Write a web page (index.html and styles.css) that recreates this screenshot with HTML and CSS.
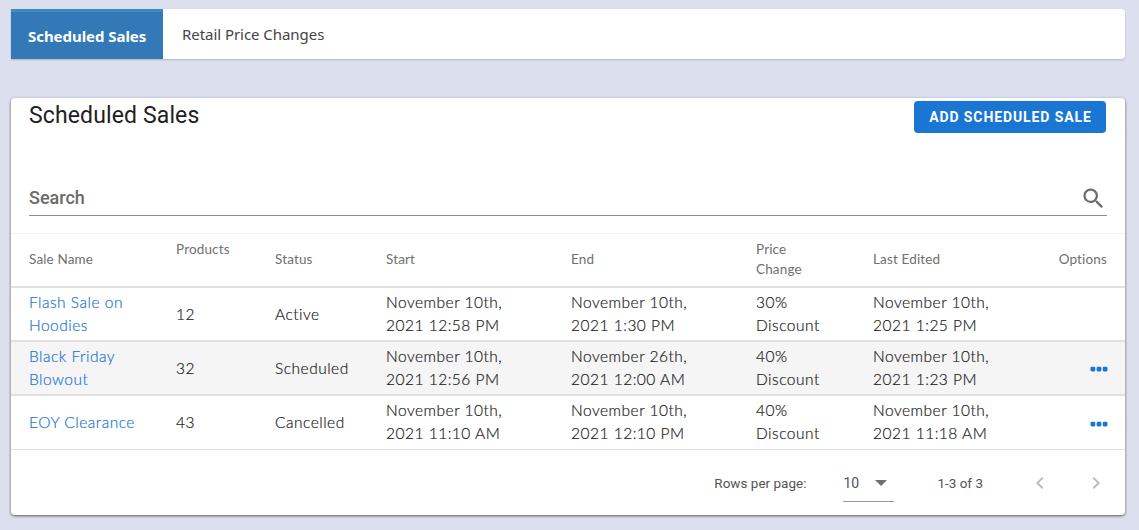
FILE: index.html
```html
<!DOCTYPE html>
<html lang="en">
<head>
<meta charset="utf-8">
<title>Scheduled Sales</title>
<link rel="stylesheet" href="styles.css">
</head>
<body>
<nav class="tabs">
  <a class="tab tab-active">Scheduled Sales</a>
  <a class="tab">Retail Price Changes</a>
</nav>
<main class="card">
  <header class="card-head">
    <h1 class="title">Scheduled Sales</h1>
    <button class="add-btn">ADD SCHEDULED SALE</button>
  </header>
  <div class="search">
    <span class="search-label">Search</span>
    <svg class="search-icon" width="27" height="27" viewBox="0 0 24 24"><path fill="#6b6b6b" d="M15.5 14h-.79l-.28-.27A6.47 6.47 0 0 0 16 9.5 6.5 6.5 0 1 0 9.5 16c1.61 0 3.09-.59 4.23-1.57l.27.28v.79l5 4.99L20.49 19l-4.99-5zm-6 0C7.01 14 5 11.99 5 9.5S7.01 5 9.5 5 14 7.01 14 9.5 11.99 14 9.5 14z"/></svg>
  </div>
  <table class="sales">
    <colgroup>
      <col class="c-name"><col class="c-prod"><col class="c-status"><col class="c-start"><col class="c-end"><col class="c-price"><col class="c-edit"><col class="c-opt">
    </colgroup>
    <thead>
      <tr>
        <th>Sale Name</th>
        <th class="th-top">Products</th>
        <th>Status</th>
        <th>Start</th>
        <th>End</th>
        <th>Price<br>Change</th>
        <th>Last Edited</th>
        <th class="th-opt">Options</th>
      </tr>
    </thead>
    <tbody>
      <tr>
        <td><a class="link">Flash Sale on<br>Hoodies</a></td>
        <td class="solo">12</td><td class="solo">Active</td>
        <td>November 10th,<br>2021 12:58 PM</td>
        <td>November 10th,<br>2021 1:30 PM</td>
        <td>30%<br>Discount</td>
        <td>November 10th,<br>2021 1:25 PM</td>
        <td></td>
      </tr>
      <tr class="alt">
        <td><a class="link">Black Friday<br>Blowout</a></td>
        <td class="solo">32</td><td class="solo">Scheduled</td>
        <td>November 10th,<br>2021 12:56 PM</td>
        <td>November 26th,<br>2021 12:00 AM</td>
        <td>40%<br>Discount</td>
        <td>November 10th,<br>2021 1:23 PM</td>
        <td class="td-opt"><svg width="18" height="6" viewBox="0 0 18 6"><rect class="dot" x="0.5" y="0.8" width="4.8" height="4.6" rx="1.3"/><rect class="dot" x="6.6" y="0.8" width="4.8" height="4.6" rx="1.3"/><rect class="dot" x="12.7" y="0.8" width="4.8" height="4.6" rx="1.3"/></svg></td>
      </tr>
      <tr class="last">
        <td><a class="link">EOY Clearance</a></td>
        <td>43</td><td>Cancelled</td>
        <td>November 10th,<br>2021 11:10 AM</td>
        <td>November 10th,<br>2021 12:10 PM</td>
        <td>40%<br>Discount</td>
        <td>November 10th,<br>2021 11:18 AM</td>
        <td class="td-opt"><svg width="18" height="6" viewBox="0 0 18 6"><rect class="dot" x="0.5" y="0.8" width="4.8" height="4.6" rx="1.3"/><rect class="dot" x="6.6" y="0.8" width="4.8" height="4.6" rx="1.3"/><rect class="dot" x="12.7" y="0.8" width="4.8" height="4.6" rx="1.3"/></svg></td>
      </tr>
    </tbody>
  </table>
  <footer class="pager">
    <span class="rows-label">Rows per page:</span>
    <span class="rows-select"><span>10</span><svg width="12" height="6" viewBox="0 0 12 6"><path fill="#6f6f6f" d="M0 0h12L6 6z"/></svg></span>
    <span class="range">1-3 of 3</span>
    <svg class="chev" width="24" height="24" viewBox="0 0 24 24"><path d="M15.41 7.41 14 6l-6 6 6 6 1.41-1.41L10.83 12z"/></svg>
    <svg class="chev chev-next" width="24" height="24" viewBox="0 0 24 24"><path d="M10 6 8.59 7.41 13.17 12l-4.58 4.59L10 18l6-6z"/></svg>
  </footer>
</main>
</body>
</html>
```
FILE: styles.css
```css
* { box-sizing: border-box; }
html, body { height: 100%; }
body {
  margin: 0;
  padding: 9px 14px 0 11px;
  background: #dcdfee;
  font-family: "Lato", "Liberation Sans", sans-serif;
  overflow: hidden;
}
.tabs {
  display: flex;
  height: 50px;
  background: #fff;
  border-radius: 0 4px 4px 0;
  box-shadow: 0 1px 2px rgba(0,0,0,.2);
}
.tab {
  display: flex;
  align-items: center;
  padding: 0 19px;
  font-family: "Noto Sans", sans-serif;
  font-size: 15px;
  letter-spacing: -.05px;
  color: #444;
}
.tab-active {
  width: 152px;
  padding: 0 0 0 17px;
  background: #3379b7;
  border-top: 3px solid #3c8dbc;
  color: #fff;
  font-weight: 700;
}
.card {
  margin-top: 39px;
  height: 417px;
  background: #fff;
  border-radius: 4px;
  box-shadow: 0 1px 3px rgba(0,0,0,.6);
}
.card-head {
  display: flex;
  justify-content: space-between;
  align-items: flex-start;
  padding: 4px 19px 0 18px;
  height: 35px;
}
.title {
  margin: 0;
  font-family: Roboto, sans-serif;
  font-size: 23px;
  font-weight: 400;
  line-height: 28px;
  letter-spacing: .13px;
  color: #212121;
}
.add-btn {
  width: 192px;
  height: 32px;
  margin-top: -1px;
  border: 0;
  padding: 0 0 0 1px;
  border-radius: 4px;
  background: #1976d2;
  color: #fff;
  font-family: Roboto, sans-serif;
  font-size: 14px;
  font-weight: 700;
  letter-spacing: .9px;
}
.search {
  display: flex;
  justify-content: space-between;
  align-items: center;
  margin: 48px 18px 0;
  height: 35px;
  border-bottom: 1px solid #8c8c8c;
}
.search-label {
  padding-bottom: 2px;
  font-family: Roboto, sans-serif;
  font-size: 18px;
  font-weight: 500;
  color: #6b6b6b;
}
.sales {
  width: 100%;
  margin-top: 17px;
  border-collapse: collapse;
  table-layout: fixed;
  border-top: 1px solid #f3f3f3;
}
.c-name { width: 165px; }
.c-prod { width: 99px; }
.c-status { width: 111px; }
.c-start { width: 185px; }
.c-end { width: 185px; }
.c-price { width: 117px; }
.c-edit { width: 170px; }
th {
  height: 53px;
  padding: 0 0 2px 18px;
  border-bottom: 2px solid #e0e0e0;
  font-size: 13.5px;
  font-weight: 400;
  line-height: 20px;
  color: #707070;
  text-align: left;
  letter-spacing: .15px;
}
th:not(:first-child), td:not(:first-child) { padding-left: 0; }
th.th-top { vertical-align: top; padding-top: 5px; }
th.th-opt { text-align: right; padding-right: 18px; }
td {
  height: 54px;
  padding: 0 0 0 18px;
  border-bottom: 2px solid #e0e0e0;
  font-size: 15.5px;
  font-weight: 300;
  line-height: 23px;
  color: #222;
  letter-spacing: .5px;
  -webkit-text-stroke: .2px currentColor;
}
td.solo { padding-top: 2px; }
.alt td { background: #f5f5f5; }
.last td { height: 55px; border-bottom: 1px solid #e0e0e0; }
.link { color: #1a76d6; }
td.td-opt { text-align: right; padding-right: 17px; }
td.td-opt svg { display: inline-block; vertical-align: middle; }
.dot { fill: #1976d2; }
.pager {
  display: flex;
  align-items: center;
  height: 66px;
  padding: 0 17px 0 0;
  justify-content: flex-end;
  font-family: Roboto, sans-serif;
  font-size: 13.5px;
  color: #555;
}
.rows-label { margin-right: 37px; }
.rows-select {
  display: flex;
  align-items: center;
  justify-content: space-between;
  width: 51px;
  height: 37px;
  margin: 1px 43px 0 0;
  padding-right: 7px;
  border-bottom: 1px solid #9a9a9a;
  font-size: 14px;
}
.range { margin-right: 45px; }
.chev { fill: #bdbdbd; }
.chev-next { margin-left: 32px; }
```
